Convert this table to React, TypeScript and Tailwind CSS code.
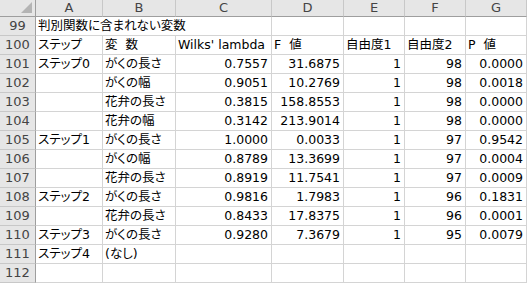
import React from "react";

const cols = ["A", "B", "C", "D", "E", "F", "G"];

type Row = { n: number; cells: string[] };

const rows: Row[] = [
  { n: 100, cells: ["ステップ", "変  数", "Wilks' lambda", "F  値", "自由度1", "自由度2", "P  値"] },
  { n: 101, cells: ["ステップ0", "がくの長さ", "0.7557", "31.6875", "1", "98", "0.0000"] },
  { n: 102, cells: ["", "がくの幅", "0.9051", "10.2769", "1", "98", "0.0018"] },
  { n: 103, cells: ["", "花弁の長さ", "0.3815", "158.8553", "1", "98", "0.0000"] },
  { n: 104, cells: ["", "花弁の幅", "0.3142", "213.9014", "1", "98", "0.0000"] },
  { n: 105, cells: ["ステップ1", "がくの長さ", "1.0000", "0.0033", "1", "97", "0.9542"] },
  { n: 106, cells: ["", "がくの幅", "0.8789", "13.3699", "1", "97", "0.0004"] },
  { n: 107, cells: ["", "花弁の長さ", "0.8919", "11.7541", "1", "97", "0.0009"] },
  { n: 108, cells: ["ステップ2", "がくの長さ", "0.9816", "1.7983", "1", "96", "0.1831"] },
  { n: 109, cells: ["", "花弁の長さ", "0.8433", "17.8375", "1", "96", "0.0001"] },
  { n: 110, cells: ["ステップ3", "がくの長さ", "0.9280", "7.3679", "1", "95", "0.0079"] },
  { n: 111, cells: ["ステップ4", "(なし)", "", "", "", "", ""] },
  { n: 112, cells: ["", "", "", "", "", "", ""] },
];

const font = { fontFamily: '"DejaVu Sans", "Noto Sans CJK JP", sans-serif' };

function RowHead({ n }: { n: number }) {
  return (
    <div className="h-[19px] flex items-center justify-center bg-[#e6e6e6] border-r border-b border-r-[#9e9e9e] border-b-[#c8c8c8] text-[13px] text-[#444]">
      {n}
    </div>
  );
}

export default function App() {
  return (
    <div className="w-[527px] h-[284px] bg-white overflow-hidden text-black [font-feature-settings:'palt']" style={font}>
      <div className="grid grid-cols-[36px_67px_73px_96px_72px_61px_61px_61px]">
        {/* header row */}
        <div className="h-[17px] relative bg-[#e6e6e6] border-r border-b border-r-[#9e9e9e] border-b-[#9e9e9e]">
          <div className="absolute right-[3px] bottom-[3px] w-0 h-0 border-l-[11px] border-l-transparent border-b-[11px] border-b-[#b4b4b4]" />
        </div>
        {cols.map((c) => (
          <div
            key={c}
            className="h-[17px] flex items-center justify-center bg-[#e6e6e6] border-r border-b border-r-[#c8c8c8] border-b-[#9e9e9e] text-[13px] text-[#444]"
          >
            {c}
          </div>
        ))}

        {/* row 99: title spills over A-C */}
        <RowHead n={99} />
        <div className="col-span-3 h-[19px] flex items-center pl-[2px] border-r border-b border-[#d4d4d4] text-[12.5px] whitespace-nowrap">
          判別関数に含まれない変数
        </div>
        {[0, 1, 2, 3].map((i) => (
          <div key={i} className="h-[19px] border-r border-b border-[#d4d4d4]" />
        ))}

        {rows.map((r) => (
          <React.Fragment key={r.n}>
            <RowHead n={r.n} />
            {r.cells.map((v, i) => {
              const num = r.n !== 100 && i >= 2;
              return (
                <div
                  key={i}
                  className={`h-[19px] flex items-center border-r border-b border-[#d4d4d4] text-[12.5px] whitespace-pre overflow-hidden ${
                    num ? "justify-end pr-[3px]" : "pl-[2px]"
                  }`}
                >
                  {v}
                </div>
              );
            })}
          </React.Fragment>
        ))}
      </div>
    </div>
  );
}
